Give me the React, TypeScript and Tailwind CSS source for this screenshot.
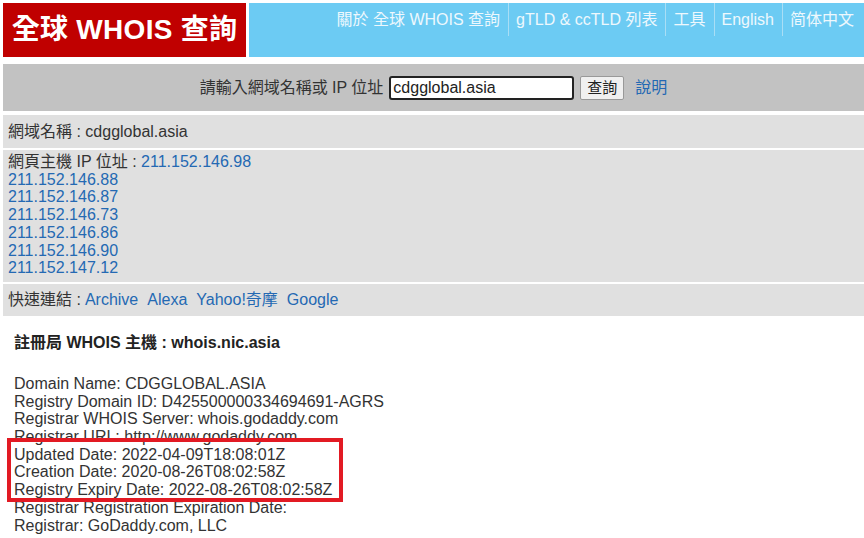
const font = "font-['Liberation_Sans','Noto_Sans_CJK_TC',sans-serif]";

const navItems = ["關於 全球 WHOIS 查詢", "gTLD & ccTLD 列表", "工具", "English", "简体中文"];

const ips = ["211.152.146.88", "211.152.146.87", "211.152.146.73", "211.152.146.86", "211.152.146.90", "211.152.147.12"];

export default function App() {
  return (
    <div className={`${font} w-[864px] h-[538px] overflow-hidden bg-white text-[16px] text-[#333]`}>
      <div className="flex pt-[3px] pl-[3px] gap-[3px] h-[57px]">
        <div className="w-[243px] bg-[#c00000] flex items-center justify-center">
          <span className="text-white font-bold text-[28px] tracking-[0.3px]">全球 WHOIS 查詢</span>
        </div>
        <div className="flex-1 bg-[#6ccbf3] flex justify-end items-start pr-[2px]">
          {navItems.map((n, i) => (
            <div key={n} className={`pl-[7px] pr-[8px] h-[33px] flex items-center text-[#eef8fd] text-[16px] ${i > 0 ? "border-l border-[#a9def5]" : ""}`}>
              {n}
            </div>
          ))}
        </div>
      </div>

      <div className="ml-[3px] mt-[7px] h-[47px] bg-[#c2c2c2] flex items-center justify-center gap-[6px]">
        <span className="text-[#333]">請輸入網域名稱或 IP 位址</span>
        <input
          defaultValue="cdgglobal.asia"
          className="w-[185px] h-[24px] border-2 border-[#222] rounded-[3px] bg-white px-[2px] text-[16px] text-[#222] outline-none"
        />
        <button className="h-[24px] w-[44px] bg-[#f0f0f0] border border-[#999] rounded-[2px] text-[15px] text-[#222]">查詢</button>
        <a className="ml-[5px] text-[#2469b3]">說明</a>
      </div>

      <div className="ml-[3px] mt-[4px] flex flex-col gap-[2px]">
        <div className="bg-[#e0e0e0] h-[33px] flex items-center pl-[5px]">網域名稱 : cdgglobal.asia</div>
        <div className="bg-[#e0e0e0] pl-[5px] pt-[3px] pb-[5px] leading-[17.7px]">
          <div>
            網頁主機 IP 位址 : <span className="text-[#2469b3]">211.152.146.98</span>
          </div>
          {ips.map((ip) => (
            <div key={ip} className="text-[#2469b3]">{ip}</div>
          ))}
        </div>
        <div className="bg-[#e0e0e0] h-[32px] flex items-center pl-[5px]">
          快速連結 : <span className="text-[#2469b3] ml-[4px] flex gap-[9px]"><a>Archive</a><a>Alexa</a><a>Yahoo!奇摩</a><a>Google</a></span>
        </div>
      </div>

      <div className="pl-[14px] pt-[15px]">
        <div className="font-bold text-[16px] text-[#222]">註冊局 WHOIS 主機 : whois.nic.asia</div>
        <div className="mt-[20px] leading-[17.7px] text-[#333]">
          <div>Domain Name: CDGGLOBAL.ASIA</div>
          <div>Registry Domain ID: D425500000334694691-AGRS</div>
          <div>Registrar WHOIS Server: whois.godaddy.com</div>
          <div>Registrar URL: http://www.godaddy.com</div>
          <div className="relative">
            <div className="absolute left-[-7px] top-[-8px] w-[336px] h-[64px] border-[4px] border-[#e21a23]" />
            Updated Date: 2022-04-09T18:08:01Z
          </div>
          <div>Creation Date: 2020-08-26T08:02:58Z</div>
          <div>Registry Expiry Date: 2022-08-26T08:02:58Z</div>
          <div>Registrar Registration Expiration Date:</div>
          <div>Registrar: GoDaddy.com, LLC</div>
        </div>
      </div>
    </div>
  );
}
